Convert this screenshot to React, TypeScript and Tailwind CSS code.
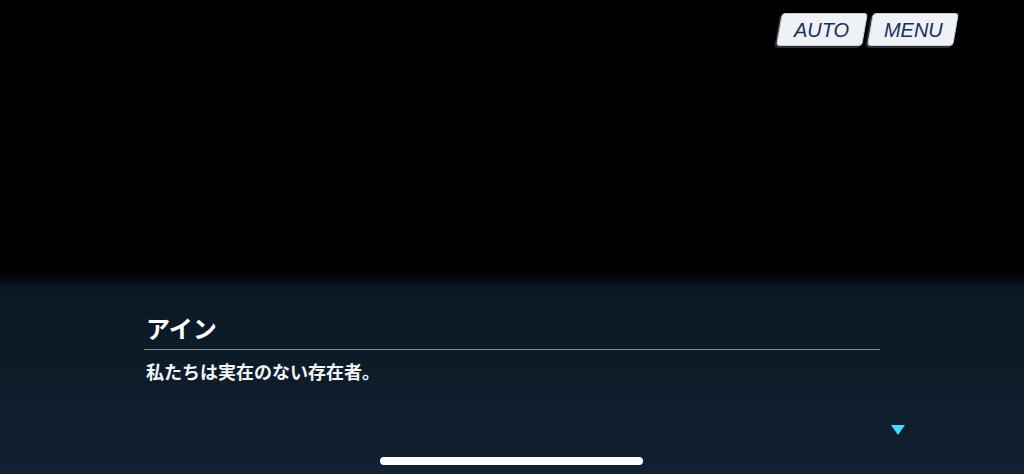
const jp = { fontFamily: '"Noto Sans CJK JP", "Noto Sans", sans-serif' };

function SkewButton({ label }: { label: string }) {
  return (
    <div className="relative">
      <div className="absolute inset-0 translate-x-[-2px] translate-y-[2px] -skew-x-[10deg] rounded-[4px] bg-[#2a2f38]" />
      <div className="relative flex h-[33px] w-[86px] -skew-x-[10deg] items-center justify-center rounded-[4px] border border-[#c9ced6] bg-[#eef1f5]">
        <span
          className="skew-x-[10deg] text-[20px] font-medium italic text-[#1b2f5c]"
          style={{ fontFamily: '"Liberation Sans", Arial, sans-serif' }}
        >
          {label}
        </span>
      </div>
    </div>
  );
}

export default function App() {
  return (
    <div className="relative flex h-[474px] w-[1024px] flex-col overflow-hidden bg-black">
      <div className="flex h-[262px] items-start justify-end gap-[5px] pr-[68px] pt-[13px]">
        <SkewButton label="AUTO" />
        <SkewButton label="MENU" />
      </div>
      <div className="flex flex-1 flex-col bg-gradient-to-b from-black via-[#0b1724] via-[12%] to-[#112131]">
        <div className="flex flex-col pl-[144px] pr-[144px] pt-[50px]" style={jp}>
          <div className="pl-[2px] text-[24px] font-bold leading-[32px] text-white">アイン</div>
          <div className="mt-[5px] h-px bg-[#7f868e]" />
          <div className="mt-[9px] pl-[2px] text-[18px] font-bold leading-[24px] text-[#f3f5f7]">
            私たちは実在のない存在者。
          </div>
        </div>
        <div className="flex justify-end pr-[119px] pt-[42px]">
          <svg width="14" height="10" viewBox="0 0 14 10">
            <polygon points="0,0 14,0 7,10" fill="#45d9f6" />
          </svg>
        </div>
      </div>
      <div className="absolute bottom-[9px] left-[380px] h-[8px] w-[263px] rounded-full bg-white" />
    </div>
  );
}
